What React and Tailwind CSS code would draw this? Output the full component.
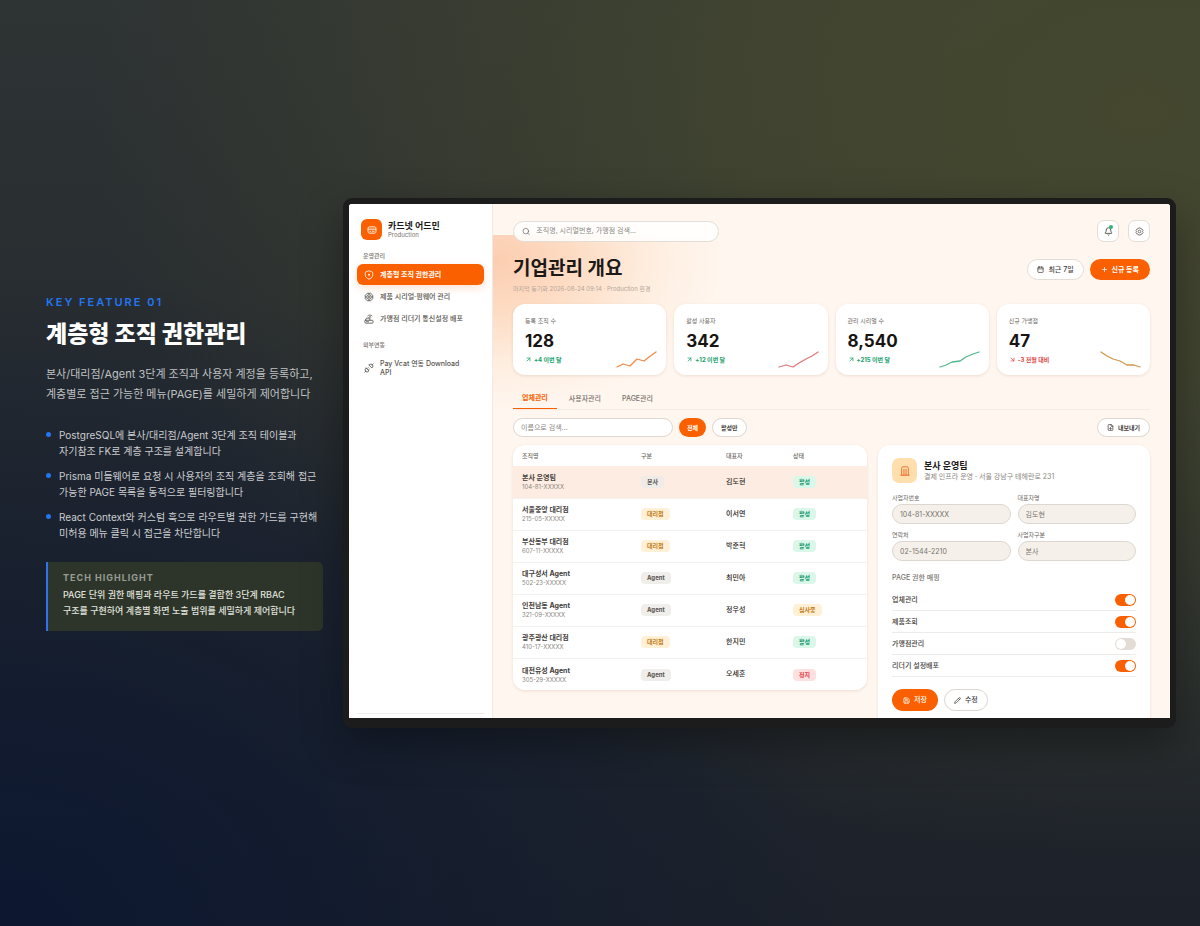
import React, { useState } from "react";
import { ArrowDownRight, ArrowUpRight, Bell, Calendar, FileDown, Pencil, Plus, Save, Search } from "lucide-react";

const CardIcon = ({ className }) => (
  <svg viewBox="0 0 24 24" className={className} fill="none" stroke="currentColor" strokeWidth="2.2" aria-hidden="true">
    <rect x="2.5" y="4.5" width="19" height="15" rx="3.5" />
    <path d="M3 10h18M7 15h2M13 15h4" strokeLinecap="round" />
  </svg>
);

const ShieldIcon = ({ className }) => (
  <svg viewBox="0 0 24 24" className={className} fill="none" stroke="currentColor" strokeWidth="2" strokeLinejoin="round" aria-hidden="true">
    <path d="M12 2c-2 0-4 1.500-7.500 2.500C3 5 3 7 3 11.500 3 17.500 8 20.500 12 22c4-1.500 9-4.500 9-10.500 0-4.500 0-6.500-1.500-7C16 3.500 14 2 12 2z" />
    <circle cx="12" cy="10.500" r="1" fill="currentColor" />
    <path d="M12 11v3" strokeLinecap="round" />
  </svg>
);

const ChipIcon = ({ className }) => (
  <svg viewBox="0 0 24 24" className={className} fill="none" stroke="currentColor" strokeWidth="2" aria-hidden="true">
    <path d="M8 3h8l5 5v8l-5 5H8l-5-5V8z" strokeLinejoin="round" />
    <circle cx="12" cy="12" r="5.500" />
    <circle cx="12" cy="12" r="2" />
    <path d="M12 3v3M12 18v3M3 12h3M18 12h3" />
  </svg>
);

const RouterIcon = ({ className }) => (
  <svg viewBox="0 0 24 24" className={className} fill="none" stroke="currentColor" strokeWidth="2" strokeLinecap="round" strokeLinejoin="round" aria-hidden="true">
    <rect x="2" y="15" width="20" height="7" rx="2.500" />
    <path d="M6 18.500h5M3 15l3-5h6M14 15V9M9 4.500c3-3 7-3 10 0M11.500 7.500c1.500-1.400 3.500-1.400 5 0" />
  </svg>
);

const PlugIcon = ({ className }) => (
  <svg viewBox="0 0 24 24" className={className} fill="none" stroke="currentColor" strokeWidth="2" strokeLinecap="round" strokeLinejoin="round" aria-hidden="true">
    <path d="M12 5l7 7 1.500-1.500a5 5 0 0 0-7-7zM19.500 4.500L22 2" />
    <path d="M5 12l7 7-1.500 1.500a5 5 0 0 1-7-7zM4.500 19.500L2 22M8 13l2-2M11 16l2-2" />
  </svg>
);

const GearIcon = ({ className }) => (
  <svg viewBox="0 0 24 24" className={className} fill="none" stroke="currentColor" strokeWidth="2" strokeLinejoin="round" aria-hidden="true">
    <path d="M9.500 2.500h5l1.500 2.700 3 .3 2.500 4-1.500 2.500 1.500 2.500-2.500 4-3 .3-1.500 2.700h-5L8 18.800l-3-.3-2.500-4L4 12 2.500 9.500l2.500-4 3-.3z" />
    <circle cx="12" cy="12" r="3.500" />
  </svg>
);

const BuildingIcon = ({ className }) => (
  <svg viewBox="0 0 24 24" className={className} fill="none" stroke="currentColor" strokeWidth="2" strokeLinecap="round" aria-hidden="true">
    <path d="M2 22h20M4 22V6c0-3 1-4 4-4h8c3 0 4 1 4 4v16M9.500 22V8M14.500 22V8" />
  </svg>
);

const bullets = [
  ["PostgreSQL에 본사/대리점/Agent 3단계 조직 테이블과", "자기참조 FK로 계층 구조를 설계합니다"],
  ["Prisma 미들웨어로 요청 시 사용자의 조직 계층을 조회해 접근", "가능한 PAGE 목록을 동적으로 필터링합니다"],
  ["React Context와 커스텀 훅으로 라우트별 권한 가드를 구현해", "미허용 메뉴 클릭 시 접근을 차단합니다"],
];

const menu = [
  { label: "계층형 조직 권한관리", icon: ShieldIcon, active: true },
  { label: "제품 시리얼·펌웨어 관리", icon: ChipIcon },
  { label: "가맹점 리더기 통신설정 배포", icon: RouterIcon },
];

const stats = [
  { label: "등록 조직 수", value: "128", change: "+4 이번 달", up: true, color: "#f08a45", points: "1,16 7,13 14,15 21,8 28,10 33,6 40,1" },
  { label: "활성 사용자", value: "342", change: "+12 이번 달", up: true, color: "#df7777", points: "1,16 8,14 15,16 21,12 28,8 34,5 40,1" },
  { label: "관리 시리얼 수", value: "8,540", change: "+215 이번 달", up: true, color: "#4fb990", points: "1,16 7,14 13,11 21,10 27,6 34,3 40,1" },
  { label: "신규 가맹점", value: "47", change: "-3 전월 대비", up: false, color: "#d39745", points: "1,1 7,5 13,8 20,10 27,14 34,14 40,16" },
];

const rows = [
  { name: "본사 운영팀", no: "104-81-XXXXX", type: "본사", owner: "김도현", status: "활성" },
  { name: "서울중앙 대리점", no: "215-05-XXXXX", type: "대리점", owner: "이서연", status: "활성" },
  { name: "부산동부 대리점", no: "607-11-XXXXX", type: "대리점", owner: "박준혁", status: "활성" },
  { name: "대구성서 Agent", no: "502-23-XXXXX", type: "Agent", owner: "최민아", status: "활성" },
  { name: "인천남동 Agent", no: "321-09-XXXXX", type: "Agent", owner: "정우성", status: "심사중" },
  { name: "광주광산 대리점", no: "410-17-XXXXX", type: "대리점", owner: "한지민", status: "활성" },
  { name: "대전유성 Agent", no: "305-29-XXXXX", type: "Agent", owner: "오세훈", status: "정지" },
];

const badgeColors = {
  본사: "bg-[#eeebe8] text-[#57534e]",
  Agent: "bg-[#f0eeea] text-[#57534e]",
  대리점: "bg-[#fff0d6] text-[#c47a14]",
  활성: "bg-[#daf7ea] text-[#15996a]",
  심사중: "bg-[#fff0d6] text-[#c47a14]",
  정지: "bg-[#ffe0e0] text-[#dc3d3d]",
};

const fields = [
  { id: "biz-no", label: "사업자번호", value: "104-81-XXXXX" },
  { id: "owner", label: "대표자명", value: "김도현" },
  { id: "phone", label: "연락처", value: "02-1544-2210" },
  { id: "biz-type", label: "사업자구분", value: "본사" },
];

const Badge = ({ children }) => (
  <span className={`block w-fit rounded-[4px] px-[6px] text-[6px] leading-[12px] font-bold ${badgeColors[children]}`}>
    {children}
  </span>
);

const Intro = () => (
  <section className="w-[277px] shrink-0">
    <p className="text-[11px] leading-[12px] font-semibold tracking-[2px] text-[#2376f0]">KEY FEATURE 01</p>
    <h1 className="mt-[9px] text-[23px] leading-[34px] font-extrabold text-white">계층형 조직 권한관리</h1>
    <p className="mt-[13px] text-[11px] leading-[20px] whitespace-nowrap text-[#bfc1c2]">
      본사/대리점/Agent 3단계 조직과 사용자 계정을 등록하고,
      <br />
      계층별로 접근 가능한 메뉴(PAGE)를 세밀하게 제어합니다
    </p>
    <ul className="mt-[23px] flex flex-col gap-[9px]">
      {bullets.map(([first, second]) => (
        <li key={first} className="flex gap-2 text-[10px] leading-[16px] whitespace-nowrap text-[#cbcdcf]">
          <span className="mt-[5px] size-[5px] shrink-0 rounded-full bg-[#2376f0]" />
          <span>
            {first}
            <br />
            {second}
          </span>
        </li>
      ))}
    </ul>
    <div className="mt-[21px] rounded-r-[5px] border-l-2 border-[#2f74ee] bg-[#2d352a] px-[15px] pt-[9px] pb-3">
      <h2 className="text-[9px] leading-[14px] font-bold tracking-[1px] text-[#989c94]">TECH HIGHLIGHT</h2>
      <p className="mt-[2px] text-[9px] leading-[16px] font-medium whitespace-nowrap text-[#e0e2dd]">
        PAGE 단위 권한 매핑과 라우트 가드를 결합한 3단계 RBAC
        <br />
        구조를 구현하여 계층별 화면 노출 범위를 세밀하게 제어합니다
      </p>
    </div>
  </section>
);

const Sidebar = () => (
  <aside className="flex w-[144px] shrink-0 flex-col border-r border-[#f1e9e2] bg-white px-2 pt-[15px] pb-1">
    <div className="flex items-center gap-[6px] pl-[4px]">
      <span className="flex size-[21px] items-center justify-center rounded-[6px] bg-[#fb6000] text-white">
        <CardIcon className="size-[10px]" />
      </span>
      <div>
        <p className="text-[9px] leading-[11px] font-bold text-[#1c1917]">카드넷 어드민</p>
        <p className="text-[6px] leading-[8px] text-[#78716c]">Production</p>
      </div>
    </div>
    <h3 className="mt-[11px] pl-[6px] text-[6px] leading-[9px] font-medium text-[#78716c]">운영관리</h3>
    <nav className="mt-1 flex flex-col gap-px">
      {menu.map(({ label, icon: Icon, active }) => (
        <a
          key={label}
          href="#"
          className={`flex h-[21px] items-center gap-[6px] rounded-[6px] px-[7px] text-[7px] whitespace-nowrap ${
            active ? "bg-[#fb6000] font-bold text-white shadow-[0_3px_8px_rgba(251,96,0,0.18)]" : "font-medium text-[#57534e]"
          }`}
        >
          <Icon className="size-[10px] shrink-0" />
          {label}
        </a>
      ))}
    </nav>
    <h3 className="mt-[11px] pl-[6px] text-[6px] leading-[9px] font-medium text-[#78716c]">외부연동</h3>
    <a href="#" className="mt-[10px] flex items-center gap-[6px] px-[7px] text-[7px] leading-[9px] font-medium text-[#57534e]">
      <PlugIcon className="size-[10px] shrink-0" />
      <span>
        Pay Vcat 연동 Download
        <br />
        API
      </span>
    </a>
    <div className="mt-auto border-t border-[#eeebe8]" />
  </aside>
);

const StatCard = ({ label, value, change, up, color, points }) => {
  const Arrow = up ? ArrowUpRight : ArrowDownRight;
  return (
    <div className="flex h-[71px] items-end justify-between rounded-[12px] bg-white px-[12px] pb-[7px] shadow-[0_1px_3px_rgba(120,80,40,0.14)]">
      <div className="pb-[4px]">
        <p className="text-[6px] leading-[9px] text-[#6b6661]">{label}</p>
        <p className="mt-[5px] text-[17px] leading-[22px] font-bold text-[#171412]">{value}</p>
        <p className={`mt-[3px] flex items-center gap-[2px] text-[6px] leading-[9px] font-bold ${up ? "text-[#16a06c]" : "text-[#e04848]"}`}>
          <Arrow className="size-[7px]" strokeWidth={2.5} />
          {change}
        </p>
      </div>
      <svg viewBox="0 0 41 17" className="-mr-[3px] h-[17px] w-[41px]" fill="none" stroke={color} strokeWidth="1.300" strokeLinecap="round" strokeLinejoin="round" aria-hidden="true">
        <polyline points={points} />
      </svg>
    </div>
  );
};

const OrgTable = () => (
  <div className="overflow-hidden rounded-[12px] bg-white shadow-[0_1px_3px_rgba(120,80,40,0.14)]">
    <table className="w-full table-fixed text-left">
      <colgroup>
        <col className="w-[119px]" />
        <col className="w-[85px]" />
        <col className="w-[67px]" />
        <col />
      </colgroup>
      <thead>
        <tr className="h-[21px] text-[6px] text-[#6b6661]">
          {["조직명", "구분", "대표자", "상태"].map((head) => (
            <th key={head} className="px-[9px] font-medium">{head}</th>
          ))}
        </tr>
      </thead>
      <tbody>
        {rows.map((row, index) => (
          <tr key={row.no} className={`h-[32px] border-b border-[#f3f0ed] last:border-0 ${index === 0 ? "bg-[#fdece1]" : ""}`}>
            <td className="px-[9px]">
              <p className="text-[7px] leading-[9px] font-bold text-[#44403c]">{row.name}</p>
              <p className="text-[6px] leading-[9px] text-[#8c8782]">{row.no}</p>
            </td>
            <td className="px-[9px]"><Badge>{row.type}</Badge></td>
            <td className="px-[9px] text-[7px] font-medium text-[#292524]">{row.owner}</td>
            <td className="px-[9px]"><Badge>{row.status}</Badge></td>
          </tr>
        ))}
      </tbody>
    </table>
  </div>
);

const DetailPanel = () => {
  const [pages, setPages] = useState({ 업체관리: true, 제품조회: true, 가맹점관리: false, "리더기 설정배포": true });

  return (
    <div className="h-[290px] rounded-t-[12px] bg-white px-[14px] pt-[13px] shadow-[0_1px_3px_rgba(120,80,40,0.14)]">
      <div className="flex items-center gap-[7px]">
        <span className="flex size-[25px] items-center justify-center rounded-[7px] bg-[#ffdfae] text-[#ea5a13]">
          <BuildingIcon className="size-[10px]" />
        </span>
        <div>
          <h3 className="text-[9px] leading-[12px] font-bold text-[#1c1917]">본사 운영팀</h3>
          <p className="text-[7px] leading-[10px] whitespace-nowrap text-[#8c8782]">결제 인프라 운영 · 서울 강남구 테헤란로 231</p>
        </div>
      </div>
      <div className="mt-[10px] grid grid-cols-2 gap-x-[7px] gap-y-[6px]">
        {fields.map((field) => (
          <div key={field.id}>
            <label htmlFor={field.id} className="block text-[6px] leading-[9px] text-[#6b6661]">{field.label}</label>
            <input
              id={field.id}
              readOnly
              value={field.value}
              className="mt-[2px] block h-[20px] w-full rounded-full border border-[#dcd7d0] bg-[#f5f1ea] px-[7px] text-[7px] text-[#78716c] outline-none"
            />
          </div>
        ))}
      </div>
      <h4 className="mt-[12px] text-[7px] leading-[10px] font-medium text-[#78716c]">PAGE 권한 매핑</h4>
      <div className="mt-[6px]">
        {Object.keys(pages).map((page) => (
          <label key={page} className="flex h-[22px] items-center justify-between border-b border-[#eeebe8] text-[7px] font-medium text-[#44403c]">
            {page}
            <input
              type="checkbox"
              role="switch"
              checked={pages[page]}
              onChange={() => setPages((prev) => ({ ...prev, [page]: !prev[page] }))}
              className="flex h-[12px] w-[21px] appearance-none items-center rounded-full bg-[#e2dcd4] px-px before:size-[10px] before:rounded-full before:bg-white checked:justify-end checked:bg-[#fb6000]"
            />
          </label>
        ))}
      </div>
      <div className="mt-[12px] flex gap-[6px]">
        <button className="flex h-[22px] items-center gap-[4px] rounded-full bg-[#fb6000] px-[11px] text-[7px] font-medium text-white">
          <Save className="size-[7px]" strokeWidth={2.5} />
          저장
        </button>
        <button className="flex h-[22px] items-center gap-[4px] rounded-full border border-[#dcd7d0] bg-white px-[9px] text-[7px] font-medium text-[#44403c]">
          <Pencil className="size-[7px]" strokeWidth={2.5} />
          수정
        </button>
      </div>
    </div>
  );
};

const Dashboard = () => (
  <main className="flex min-w-0 flex-1 flex-col bg-[#fff6ef] bg-[radial-gradient(230px_150px_at_0px_25px,#fccdb0_0%,#fddcc4_35%,#feeee0_70%,#fff6ef_100%)] bg-[position:0_31px] bg-no-repeat px-[20px] pt-[16px]">
    <div className="flex items-center justify-between">
      <label className="flex h-[21px] w-[206px] items-center gap-[6px] rounded-full border border-[#e2ddd5] bg-white/85 px-[8px]">
        <Search className="size-[9px] text-[#6b6661]" />
        <input aria-label="검색" placeholder="조직명, 시리얼번호, 가맹점 검색..." className="w-full bg-transparent text-[7px] outline-none placeholder:text-[#8c8782]" />
      </label>
      <div className="flex gap-[9px]">
        <button aria-label="알림" className="relative flex size-[22px] items-center justify-center rounded-[7px] border border-[#e2ddd5] bg-white text-[#57534e]">
          <Bell className="size-[9px]" strokeWidth={2.5} />
          <span className="absolute top-[4px] right-[5px] size-[4px] rounded-full bg-[#2fb574]" />
        </button>
        <button aria-label="설정" className="flex size-[22px] items-center justify-center rounded-[7px] border border-[#e2ddd5] bg-white text-[#57534e]">
          <GearIcon className="size-[9px]" />
        </button>
      </div>
    </div>
    <div className="mt-[14px] flex items-start justify-between">
      <div>
        <h2 className="text-[19px] leading-[26px] font-bold text-[#1c1917]">기업관리 개요</h2>
        <p className="mt-[2px] text-[6px] leading-[9px] text-[#b5a79b]">마지막 동기화 2026-08-24 09:14 · Production 환경</p>
      </div>
      <div className="flex gap-[6px] pt-[3px]">
        <button className="flex h-[21px] items-center gap-[4px] rounded-full border border-[#e2ddd5] bg-white px-[9px] text-[7px] font-medium text-[#44403c]">
          <Calendar className="size-[7px]" strokeWidth={2.5} />
          최근 7일
        </button>
        <button className="flex h-[21px] items-center gap-[4px] rounded-full bg-[#fb6000] px-[11px] text-[7px] font-bold text-white">
          <Plus className="size-[7px]" strokeWidth={2.5} />
          신규 등록
        </button>
      </div>
    </div>
    <div className="mt-[11px] grid grid-cols-4 gap-[8px]">
      {stats.map((stat) => (
        <StatCard key={stat.label} {...stat} />
      ))}
    </div>
    <div role="tablist" className="mt-[12px] flex gap-[3px] border-b border-[#f5ebe2] text-[7px] leading-[21px]">
      <button role="tab" aria-selected="true" className="border-b border-[#fb6000] px-[9px] font-bold text-[#fb6000]">업체관리</button>
      <button role="tab" aria-selected="false" className="px-[9px] font-medium text-[#78716c]">사용자관리</button>
      <button role="tab" aria-selected="false" className="px-[9px] font-medium text-[#78716c]">PAGE관리</button>
    </div>
    <div className="mt-[8px] flex items-center gap-[6px]">
      <input aria-label="이름으로 검색" placeholder="이름으로 검색..." className="h-[19px] w-[160px] rounded-full border border-[#dcd7d0] bg-white px-[7px] text-[7px] outline-none placeholder:text-[#8c8782]" />
      <button className="h-[19px] rounded-full bg-[#fb6000] px-[8px] text-[6px] font-bold text-white">전체</button>
      <button className="h-[19px] rounded-full border border-[#dcd7d0] bg-white px-[8px] text-[6px] font-bold text-[#44403c]">활성만</button>
      <button className="ml-auto flex h-[19px] items-center gap-[4px] rounded-full border border-[#dcd7d0] bg-white px-[9px] text-[6px] font-bold text-[#44403c]">
        <FileDown className="size-[7px]" strokeWidth={2.5} />
        내보내기
      </button>
    </div>
    <div className="mt-[8px] grid grid-cols-[354fr_272fr] items-start gap-[11px]">
      <OrgTable />
      <DetailPanel />
    </div>
  </main>
);

const App = () => (
  <div
    lang="ko"
    className="flex min-h-screen items-center gap-[20px] bg-[#23282d] bg-[radial-gradient(ellipse_at_0%_100%,#0c1730_0%,transparent_50%),radial-gradient(ellipse_at_95%_12%,#45482f_0%,#45482fcc_25%,transparent_65%),linear-gradient(to_bottom,#2e3334,#1c212a)] pr-[24px] pl-[46px] font-['Inter','Noto_Sans_CJK_KR',sans-serif]"
  >
    <Intro />
    <div className="min-w-0 flex-1 rounded-[9px] bg-[#1b1c1b] px-[6px] pt-[6px] pb-[10px] shadow-[0_15px_40px_rgba(0,0,0,0.35)]">
      <div className="flex aspect-[16/10] overflow-hidden rounded-t-[3px] bg-white">
        <Sidebar />
        <Dashboard />
      </div>
    </div>
  </div>
);

export default App;
